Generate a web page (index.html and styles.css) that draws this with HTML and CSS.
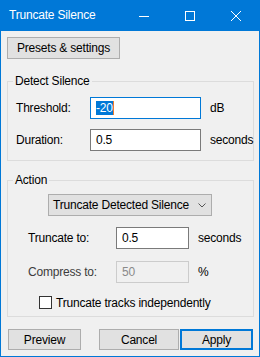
FILE: index.html
```html
<!DOCTYPE html>
<html lang="en">
<head>
    <meta charset="UTF-8">
    <meta name="viewport" content="width=device-width, initial-scale=1.0">
    <title>Truncate Silence</title>
    <link rel="stylesheet" href="styles.css">
</head>
<body>
    <div class="window">
        <div class="titlebar">
            <span class="title">Truncate Silence</span>
            <div class="controls">
                <span class="ctl">
                    <svg width="10" height="10" viewBox="0 0 10 10"><line x1="0" y1="5.5" x2="10" y2="5.5" stroke="#fff" stroke-width="1"/></svg>
                </span>
                <span class="ctl">
                    <svg width="10" height="10" viewBox="0 0 10 10"><rect x="0.5" y="0.5" width="9" height="9" fill="none" stroke="#fff" stroke-width="1"/></svg>
                </span>
                <span class="ctl">
                    <svg width="10" height="10" viewBox="0 0 10 10"><path d="M0 0 L10 10 M10 0 L0 10" stroke="#fff" stroke-width="1"/></svg>
                </span>
            </div>
        </div>

        <div class="content">
            <button class="btn presets">Presets &amp; settings</button>

            <fieldset class="group group-detect">
                <legend>Detect Silence</legend>
                <div class="group-body">
                    <div class="grid grid-detect">
                        <label>Threshold:</label>
                        <div class="edit focused"><span class="sel">-20</span><span class="caret"></span></div>
                        <span class="unit">dB</span>

                        <label>Duration:</label>
                        <div class="edit">0.5</div>
                        <span class="unit">seconds</span>
                    </div>
                </div>
            </fieldset>

            <fieldset class="group group-action">
                <legend>Action</legend>
                <div class="group-body">
                    <div class="combo">
                        <span>Truncate Detected Silence</span>
                        <svg class="chevron" width="8" height="5" viewBox="0 0 8 5"><polyline points="0.5,0.5 4,4 7.5,0.5" fill="none" stroke="#555" stroke-width="1"/></svg>
                    </div>

                    <div class="grid grid-action">
                        <label>Truncate to:</label>
                        <div class="edit">0.5</div>
                        <span class="unit">seconds</span>

                        <label class="dim">Compress to:</label>
                        <div class="edit disabled">50</div>
                        <span class="unit">%</span>
                    </div>

                    <div class="check-row">
                        <span class="checkbox"></span>
                        <span>Truncate tracks independently</span>
                    </div>
                </div>
            </fieldset>

            <div class="button-row">
                <button class="btn preview">Preview</button>
                <div class="right-buttons">
                    <button class="btn cancel">Cancel</button>
                    <button class="btn apply">Apply</button>
                </div>
            </div>
        </div>
    </div>
</body>
</html>
```

FILE: styles.css
```css
* {
    margin: 0;
    padding: 0;
    box-sizing: border-box;
}

body {
    margin: 0;
    background: #f0f0f0;
    font-family: "Segoe UI", "Liberation Sans", Arial, sans-serif;
    font-size: 12px;
    letter-spacing: -0.2px;
    color: #000;
}

.window {
    width: 260px;
    height: 357px;
    background: #f0f0f0;
    border: 1px solid #0078d7;
    border-top: none;
}

/* title bar */
.titlebar {
    height: 31px;
    background: #0078d7;
    display: flex;
    align-items: center;
    justify-content: space-between;
    color: #fff;
}

.title {
    padding-left: 8px;
    line-height: 15px;
}

.controls {
    display: flex;
    height: 31px;
}

.ctl {
    width: 46px;
    display: flex;
    align-items: center;
    justify-content: center;
}

.ctl svg {
    shape-rendering: crispEdges;
}

/* body */
.content {
    padding: 6px 5px 0 6px;
}

.btn {
    font-family: inherit;
    font-size: 12px;
    letter-spacing: inherit;
    color: #000;
    background: #e1e1e1;
    border: 1px solid #adadad;
    height: 21px;
    line-height: 18px;
}

.presets {
    display: block;
    width: 113px;
    height: 22px;
}

.group {
    border: 1px solid #dcdcdc;
    padding: 0;
    margin: 0;
}

.group legend {
    margin-left: 5px;
    padding: 0 2px;
    line-height: 14px;
}

.group-detect {
    margin-top: 15px;
}

.group-action {
    margin-top: 12px;
}

.group-body {
    padding: 9px 0 9px 8px;
}

.group-action .group-body {
    padding: 7px 0 7px 0;
}

.grid {
    display: grid;
    align-items: center;
    column-gap: 9px;
}

.grid label {
    margin-right: -9px;
}

.grid label.dim {
    color: #3c3c3c;
}

.grid-detect {
    grid-template-columns: 65px 111px auto;
    row-gap: 10px;
}

.grid-action {
    grid-template-columns: 79px 73px auto;
    row-gap: 12px;
    margin: 11px 0 0 20px;
}

.edit {
    height: 22px;
    background: #fff;
    border: 1px solid #7a7a7a;
    padding-left: 5px;
    line-height: 20px;
    display: flex;
    align-items: center;
}

.edit.focused {
    border-color: #0078d7;
}

.edit.disabled {
    background: #f0f0f0;
    border-color: #cccccc;
    color: #8a8a8a;
}

.sel {
    background: #0078d7;
    color: #fff;
    line-height: 14px;
}

.caret {
    width: 1px;
    height: 14px;
    background: #f07c2a;
}

.combo {
    width: 164px;
    height: 22px;
    margin-left: 40px;
    background: #e1e1e1;
    border: 1px solid #adadad;
    display: flex;
    align-items: center;
    justify-content: space-between;
    padding: 0 5px 0 4px;
}

.chevron {
    margin-top: 1px;
}

.check-row {
    display: flex;
    align-items: center;
    gap: 4px;
    margin: 13px 0 0 31px;
    height: 13px;
}

.checkbox {
    width: 13px;
    height: 13px;
    border: 1px solid #333;
    background: #fff;
}

.button-row {
    margin-top: 12px;
    display: flex;
    justify-content: space-between;
}

.preview {
    width: 73px;
    margin-left: 1px;
}

.right-buttons {
    display: flex;
    gap: 1px;
}

.cancel {
    width: 80px;
}

.apply {
    width: 73px;
    border: 2px solid #0078d7;
    margin-right: 1px;
}
```
